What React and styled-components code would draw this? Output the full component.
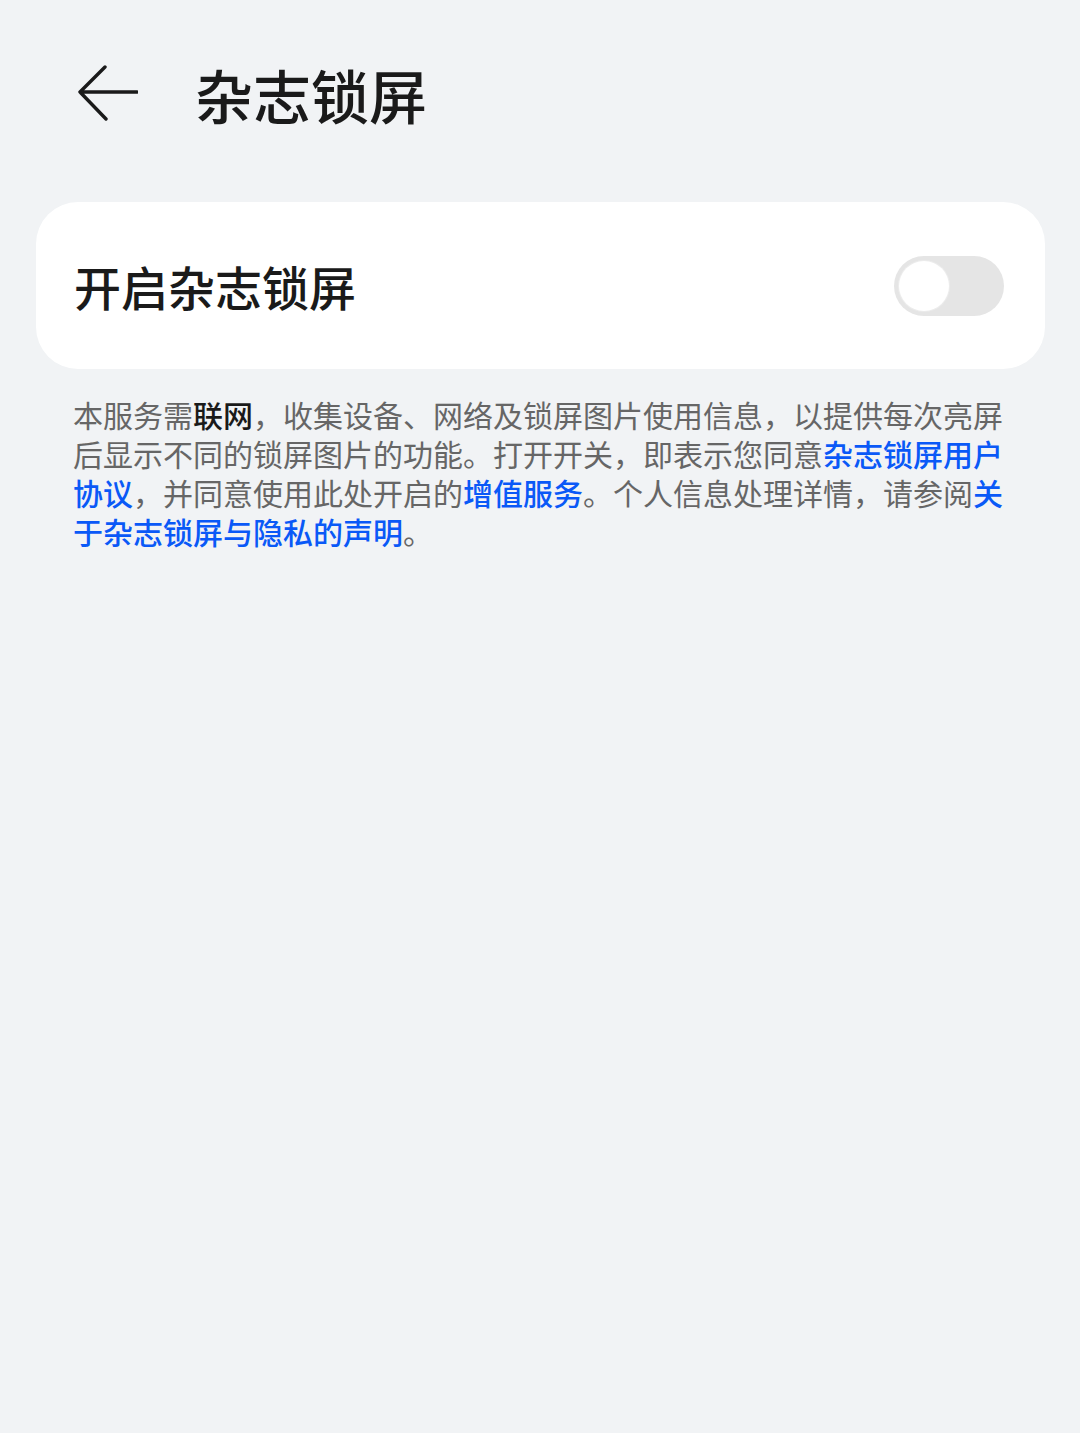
import React, { useState } from "react";
import styled, { createGlobalStyle } from "styled-components";

const GlobalStyle = createGlobalStyle`
  html, body {
    margin: 0;
    padding: 0;
    background-color: #f1f3f5;
    font-family: "Noto Sans CJK SC", "Noto Sans", sans-serif;
  }
  * {
    box-sizing: border-box;
  }
`;

const lines = [
  [
    { t: "本服务需" },
    { t: "联网", kind: "strong" },
    { t: "，收集设备、网络及锁屏图片使用信息，以提供每次亮屏" }
  ],
  [
    { t: "后显示不同的锁屏图片的功能。打开开关，即表示您同意" },
    { t: "杂志锁屏用户", kind: "link" }
  ],
  [
    { t: "协议", kind: "link" },
    { t: "，并同意使用此处开启的" },
    { t: "增值服务", kind: "link" },
    { t: "。个人信息处理详情，请参阅" },
    { t: "关", kind: "link" }
  ],
  [
    { t: "于杂志锁屏与隐私的声明", kind: "link" },
    { t: "。" }
  ]
];

export default function App() {
  const [enabled, setEnabled] = useState(false);

  return (
    <>
      <GlobalStyle />
      <Page>
        <Header>
          <BackButton aria-label="返回">
            <svg width="60" height="56" viewBox="0 0 60 56" fill="none">
              <path
                d="M59 27H2M27 2L2 27L28 54"
                stroke="#1a1a1a"
                strokeWidth="3.4"
                strokeLinecap="round"
                strokeLinejoin="round"
              />
            </svg>
          </BackButton>
          <Title>杂志锁屏</Title>
        </Header>

        <Card>
          <Label>开启杂志锁屏</Label>
          <Switch $on={enabled} onClick={() => setEnabled(!enabled)}>
            <Knob $on={enabled} />
          </Switch>
        </Card>

        <Notice>
          {lines.map((line, i) => (
            <Line key={i} $last={i === lines.length - 1}>
              {line.map((seg, j) =>
                seg.kind === "link" ? (
                  <Link key={j}>{seg.t}</Link>
                ) : seg.kind === "strong" ? (
                  <Strong key={j}>{seg.t}</Strong>
                ) : (
                  <span key={j}>{seg.t}</span>
                )
              )}
            </Line>
          ))}
        </Notice>
      </Page>
    </>
  );
}

const Page = styled.div`
  min-height: 1433px;
  background-color: #f1f3f5;
`;

const Header = styled.div`
  height: 194px;
  display: flex;
  align-items: center;
  padding: 0 78px 6px;
`;

const BackButton = styled.button`
  background: none;
  border: none;
  padding: 0;
  width: 60px;
  height: 56px;
  display: flex;
  margin-top: -2px;
  cursor: pointer;
`;

const Title = styled.h1`
  margin: 0 0 0 57px;
  font-size: 58px;
  font-weight: 500;
  color: #1a1a1a;
  line-height: 1;
`;

const Card = styled.div`
  margin: 8px 35px 0 36px;
  height: 167px;
  background-color: #ffffff;
  border-radius: 42px;
  display: flex;
  align-items: center;
  justify-content: space-between;
  padding: 0 41px 0 38px;
`;

const Label = styled.span`
  font-size: 47px;
  font-weight: 500;
  color: #1a1a1a;
`;

const Switch = styled.div`
  width: 110px;
  height: 60px;
  border-radius: 30px;
  background-color: ${(p) => (p.$on ? "#0a59f7" : "#e5e5e5")};
  display: flex;
  align-items: center;
  padding: 0 5px;
  justify-content: ${(p) => (p.$on ? "flex-end" : "flex-start")};
  cursor: pointer;
`;

const Knob = styled.div`
  width: 50px;
  height: 50px;
  border-radius: 50%;
  background-color: #ffffff;
  box-shadow: 0 0 0 1px #ececec;
`;

const Notice = styled.div`
  padding: 26px 78px 0 73px;
  font-size: 30px;
  line-height: 39px;
  color: #666666;
`;

const Line = styled.div`
  text-align: ${(p) => (p.$last ? "left" : "justify")};
  text-align-last: ${(p) => (p.$last ? "left" : "justify")};
  white-space: nowrap;
`;

const Strong = styled.span`
  color: #1a1a1a;
  font-weight: 500;
`;

const Link = styled.span`
  color: #0a59f7;
  font-weight: 500;
`;
